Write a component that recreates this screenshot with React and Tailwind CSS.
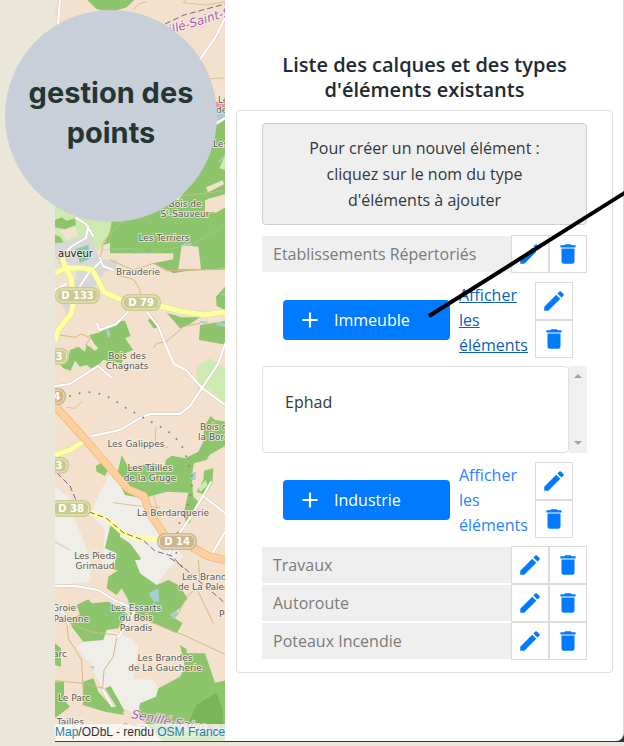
const GREEN = "#8dc56c";
const LIGHT = "#cdebb0";
const PALE = "#f0eee8";
const WATER = "#a9cdd3";
const TRACK = "#d3b885";

const labels = [
  { x: 185, y: 207, lines: ["Bois de", "Sᵗ-Sauveur"], anchor: "middle" },
  { x: 164, y: 241, lines: ["Les Terriers"], anchor: "middle" },
  { x: 138, y: 275, lines: ["Brauderie"], anchor: "middle" },
  { x: 127, y: 359, lines: ["Bois des", "Chagnats"], anchor: "middle" },
  { x: 136, y: 447, lines: ["Les Galippes"], anchor: "middle" },
  { x: 150, y: 471, lines: ["Les Tailles", "de la Gruge"], anchor: "middle" },
  { x: 200, y: 430, lines: ["Bois de"], anchor: "start" },
  { x: 198, y: 440, lines: ["la Borde"], anchor: "start" },
  { x: 173, y: 516, lines: ["La Berdarquerie"], anchor: "middle" },
  { x: 95, y: 559, lines: ["Les Pieds", "Grimaud"], anchor: "middle" },
  { x: 182, y: 580, lines: ["Les Brandes"], anchor: "start" },
  { x: 178, y: 590, lines: ["de La Palenne"], anchor: "start" },
  { x: 136, y: 611, lines: ["Les Essarts", "du Bois", "Paradis"], anchor: "middle" },
  { x: 76, y: 611, lines: ["Groie"], anchor: "end" },
  { x: 89, y: 622, lines: ["Palenne"], anchor: "end" },
  { x: 219, y: 617, lines: ["Pi"], anchor: "start" },
  { x: 67, y: 657, lines: ["Parc"], anchor: "end" },
  { x: 165, y: 661, lines: ["Les Brandes", "de La Gaucherie"], anchor: "middle" },
  { x: 74, y: 701, lines: ["Le Parc"], anchor: "middle" },
  { x: 84, y: 725, lines: ["Tailles"], anchor: "end" },
  { x: 218, y: 103, lines: ["Les"], anchor: "start" },
  { x: 216, y: 113, lines: ["des"], anchor: "start" },
  { x: 213, y: 147, lines: ["Les"], anchor: "start" },
];

const shields = [
  { x: 55, y: 287, w: 45, text: "D 133", fill: "#cbcb91" },
  { x: 121, y: 294, w: 40, text: "D 79", fill: "#cbcb91" },
  { x: 36, y: 348, w: 33, text: "3", fill: "#cbcb91", tx: 59 },
  { x: 36, y: 388, w: 30, text: "4", fill: "#cfb58b", tx: 57 },
  { x: 36, y: 457, w: 33, text: "3", fill: "#cbcb91", tx: 59 },
  { x: 51, y: 500, w: 40, text: "D 38", fill: "#cbcb91" },
  { x: 157, y: 533, w: 40, text: "D 14", fill: "#cfb58b" },
];

function MapDrawing() {
  return (
    <svg
      className="block h-full w-full"
      viewBox="55 0 170 741"
      preserveAspectRatio="xMinYMin slice"
      role="img"
      aria-label="Carte"
      fontFamily="'DejaVu Sans', sans-serif"
    >
      <rect x="55" width="170" height="741" fill="#f3e1ce" />

      <g transform="scale(.333333)">
        <path fill={GREEN} d="M262 0H403L380 22 335 36 290 28Z" />
        <path fill={GREEN} d="M675 360 640 380 620 470 530 610 430 640 330 662V760H675Z" />
        <path fill="#f3e1ce" d="M675 583 622 597 612 638 658 636 675 622ZM618 562 668 541 672 553 624 577Z" />
        <path fill={LIGHT} d="M165 600 330 655 322 720 296 750H165Z" />
        <path fill="#ee8d91" d="M645 305H675V325H648Z" />
        <path fill={WATER} d="M648 328H675V355L652 362ZM655 485 675 462V468L658 488Z" />
        <path fill={LIGHT} d="M675 465 658 505 675 510Z" />
        <g fill="none" stroke={TRACK} strokeWidth="3">
          <path d="M557 0 550 8 620 15 675 5M540 588 620 580 675 570M630 236 675 234M400 30 415 12 440 5M165 40 180 45" opacity=".8" />
        </g>
      </g>

      <g transform="translate(50 200) scale(.333333)">
        <path fill={GREEN} d="M180 60 200 0H530V205L415 212 370 220 310 190 370 178V140L300 125 250 128 230 115 190 125 160 135Z" />
        <path fill="#f3e1ce" d="M465 0H530V20L498 38 465 34ZM395 135 445 140 453 208H385Z" />
        <path fill={LIGHT} d="M15 10 90 40 185 62 180 95 160 135 130 120 100 135 60 125 15 145Z" />
        <path fill="#f3e1ce" d="M30 90 75 80 85 105 50 120Z" />
        <path fill={GREEN} d="M15 60 35 52 50 62 75 55 78 75 45 88 15 82ZM15 105 30 110 42 130 25 142 15 138Z" />
        <path fill="#d8d8d8" d="M60 125 110 100 130 125 150 180 200 178 200 210 165 215 130 270 75 265 80 200 30 195 15 170V130ZM35 315 60 305 70 335 50 340Z" />
        <path fill="#8ccba9" d="M75 148 115 135 120 175 90 190Z" />
        <path fill={GREEN} d="M530 255 498 290 500 318 530 332ZM350 338 395 352 450 352 420 372 390 385ZM293 360 310 352 325 380 312 386ZM450 375 530 362V434L447 420ZM118 405 145 398 200 365 225 362 242 408 225 415 250 450 225 460 215 490 160 480 130 510 110 495 90 500 75 482 62 512 40 505 25 488 55 475 60 450 85 440 105 455 110 435 140 445Z" />
        <path fill="#f3e1ce" d="M115 415 145 445 135 452 105 430Z" />
        <path fill={LIGHT} d="M440 500 480 475 530 510V570H440Z" />
        <path fill={WATER} d="M400 130 428 130 422 138 405 138ZM450 362 475 365 470 372 450 368ZM498 365 530 370V382L500 376ZM168 390 176 388 182 408 174 414ZM510 285 526 278V286Z" />
        <g fill="none" stroke={TRACK} strokeWidth="3">
          <path d="M180 180 250 210 310 190 350 212 530 208M150 180 160 125 215 65M250 238 268 265 272 285M30 405 75 412 95 402 122 415 105 438M310 445 320 430 350 425 400 380 450 370M250 238 200 225" />
        </g>
        <path d="M155 150 240 145 290 160 330 152 420 135 530 75" fill="none" stroke="#a9cbb0" strokeWidth="2" strokeDasharray="12 4" />
      </g>

      <g transform="translate(50 380) scale(.333333)">
        <path fill={PALE} d="M185 275 225 320 290 350 340 450 360 480 400 530 350 570H15V320L80 370 90 420 110 440 135 490 160 500 165 460 120 410 150 335 170 300Z" />
        <path fill="#f3e1ce" d="M30 270 170 280 150 340 110 390 165 450 155 570H130L100 480 75 420Z" />
        <path fill={LIGHT} d="M455 0 530 0V75L490 40Z" />
        <path fill={GREEN} d="M215 225 235 262 310 250 345 265 347 240 365 227 405 235 445 215 460 185 462 140 482 108 495 120 530 125V195L478 225 470 240 432 250 425 290 430 350 445 365 425 410 420 428 410 432 400 405 415 338 350 335 280 355 225 345 200 290ZM137 258 155 248 178 260 165 288 140 275ZM462 272 490 265 487 310 465 345 440 335 460 300ZM180 440 190 432 210 445V470L240 490 273 535 250 570H190L200 520 165 505Z" />
        <path fill={LIGHT} d="M445 320 468 300 472 318 450 336Z" />
        <path fill={WATER} d="M422 280 438 275 436 300 425 300ZM290 300 300 295 300 310Z" />
        <g fill="none" stroke={TRACK} strokeWidth="3">
          <path d="M50 82 75 85 95 65M318 140 315 190 355 203M190 368 240 375 290 380 330 382M310 345 320 380 318 400M15 485 60 510" opacity=".8" />
        </g>
      </g>

      <g transform="translate(50 560) scale(.333333)">
        <path fill={PALE} d="M15 0H120V65L15 75ZM240 0H370L345 40 320 75 285 60 260 30ZM80 260 165 205 240 235 265 260 250 355 310 360 325 385 318 410 270 430 265 465 210 440 185 395 155 380 120 310 95 285Z" />
        <path fill={GREEN} d="M205 0H255L270 40 320 75 355 60 385 75 413 115 390 145 360 165 398 190 380 220 335 200 300 185 240 165 235 120 215 85 200 105 170 85 175 50 205 30ZM80 135 115 118 125 130 175 125 205 140 235 165 205 205 170 210 160 240 100 245 65 200 60 175 90 165ZM390 255 410 268V280L465 280 495 368 530 360V570H360L265 465 270 430 318 410 325 385 390 350 405 320ZM100 365 130 355 145 395 185 440 215 440 222 465 165 455 98 435ZM165 385 182 378 225 455 205 450ZM15 365H42V420L60 440 15 475ZM15 250 33 265V320L15 315Z" />
        <path fill="#78b657" d="M440 435 500 398 518 450 520 500 460 550 415 490Z" />
        <path fill={WATER} d="M295 100 325 85 328 125 310 125ZM360 165 380 150 385 165 370 178ZM118 320 130 318 133 328Z" />
        <g fill="none" stroke={TRACK} strokeWidth="3">
          <path d="M50 185 55 235 95 300 100 400M50 185 120 215 200 225M200 235 190 290 162 330 158 385M15 362 100 370 160 385M300 185 400 225 530 285M350 180 385 160 410 110 440 85 490 190M445 0 450 60" />
        </g>
      </g>

      <g fill="none" strokeLinecap="round" strokeLinejoin="round">
        {[
          { c: "#d5cabc", w: 3 },
          { c: "#ffffff", w: 2 },
        ].map(({ c, w }) => (
          <g key={c} stroke={c} strokeWidth={w}>
            <path d="M60 0 58 24M225 18 215 38 198 62M225 118 212 126" />
            <path d="M76 218 86 224 93 236M88 226 86 238 72 246 66 252M100 258 103 266 113 270M100 262 88 274 80 286M128 312 116 324 100 330 97 324M147 312 158 326 166 346 174 364 186 370 202 388 225 405M55 386 70 384 98 366 112 378M225 344 218 364 202 388 190 406 180 414 150 414 140 418 120 430 92 436M55 290 66 284" />
            <path d="M203 496 225 513M203 496 190 518 176 538 168 555M225 532 212 554" />
            <path d="M55 586 75 586 98 590 114 600 128 606 134 613 118 638M55 608 66 615 68 624M103 690 112 706" />
          </g>
        ))}
        <path d="M203 496 211 482" stroke="#fff" strokeWidth="2" />
        <path d="M55 273 66 268 84 268 92 270 98 280 104 292 122 300 160 306 180 311 204 315 225 312M66 268 71 278 74 300 71 314 58 330 55 342M66 268 62 258M55 455 70 450 86 440" stroke="#dede9c" strokeWidth="6" strokeLinecap="butt" />
        <path d="M55 273 66 268 84 268 92 270 98 280 104 292 122 300 160 306 180 311 204 315 225 312M66 268 71 278 74 300 71 314 58 330 55 342M66 268 62 258M55 455 70 450 86 440M85 511 106 518 122 532 138 539 160 539" stroke="#feff9f" strokeWidth="5" strokeLinecap="butt" />
        <path d="M55 406 84 438 128 489 144 496 150 514 168 540 190 546 208 556 225 560" stroke="#e3ae78" strokeWidth="8" />
        <path d="M55 406 84 438 128 489 144 496 150 514 168 540 190 546 208 556 225 560" stroke="#ffcf9c" strokeWidth="7" />
        <g stroke="#8d5a87" strokeWidth="1" strokeDasharray="6 3" strokeLinecap="butt">
          <path d="M165 24 184 15 225 4" />
          <path d="M57 473 70 486 76 500M89 512 106 518 124 533 143 540 155 551 172 556 183 568M170 558 182 566 200 582 212 592 225 603M110 738 124 724 150 727 180 735" />
        </g>
        <path d="M70 396 80 393 92 392 101 394 110 398 120 404 129 410 138 414 147 420 157 425 166 430 175 437 182 446 186 456 189 466 192 476 192 486 190 497 187 507 178 526 176 558" stroke="#8c8078" strokeWidth="2" strokeDasharray="0 10" />
      </g>

      <g fontSize="9" fill="#5b5852" stroke="#f7f2e9" strokeWidth="2" strokeOpacity=".75" paintOrder="stroke" strokeLinejoin="round">
        {labels.map(({ x, y, lines, anchor }) => (
          <text key={lines[0] + y} x={x} y={y} textAnchor={anchor}>
            {lines.map((line, i) => (
              <tspan key={line} x={x} dy={i === 0 ? 0 : 10}>{line}</tspan>
            ))}
          </text>
        ))}
        <text x="93" y="257" textAnchor="end" fontSize="10" fill="#222">auveur</text>
        <g fontSize="12" fontStyle="italic" fill="#b05cb5">
          <text transform="translate(170 34) rotate(-17)">illé-Saint-Sauveur</text>
          <text transform="translate(131 718) rotate(11)">Senillé-Saint-Sauveur</text>
        </g>
      </g>

      {shields.map(({ x, y, w, text, fill, tx }) => (
        <g key={x + text + y}>
          <rect x={x} y={y} width={w} height="17" rx="8" fill={fill} />
          <rect x={x + 2} y={y + 2} width={w - 4} height="13" rx="6" fill="none" stroke="#eeeacb" />
          <text x={tx ?? x + w / 2} y={y + 12} textAnchor="middle" fontSize="10" fontWeight="700" fill="#fff">{text}</text>
        </g>
      ))}
    </svg>
  );
}

const icons = {
  edit: "M3 17.25V21h3.75L17.81 9.94l-3.75-3.75L3 17.25zM20.71 7.04a1 1 0 0 0 0-1.41l-2.34-2.34a1 1 0 0 0-1.41 0l-1.83 1.83 3.75 3.75 1.83-1.83z",
  trash: "M6 19a2 2 0 0 0 2 2h8a2 2 0 0 0 2-2V7H6v12zM19 4h-3.5l-1-1h-5l-1 1H5v2h14V4z",
  plus: "M19 13h-6v6h-2v-6H5v-2h6V5h2v6h6v2z",
};

function Icon({ name }) {
  return (
    <svg className="size-[26px]" viewBox="0 0 24 24" fill="currentColor" aria-hidden="true">
      <path d={icons[name]} />
    </svg>
  );
}

function IconButton({ label, icon }) {
  return (
    <button
      type="button"
      aria-label={label}
      className="flex size-[38px] items-center justify-center border border-[#dcdcdc] bg-white text-[#007bff]"
    >
      <Icon name={icon} />
    </button>
  );
}

function Actions({ name, vertical }) {
  return (
    <div className={vertical ? "flex flex-col" : "flex"}>
      <IconButton label={`Modifier ${name}`} icon="edit" />
      <IconButton label={`Supprimer ${name}`} icon="trash" />
    </div>
  );
}

function LayerRow({ name }) {
  return (
    <div className="flex items-center">
      <div className="flex h-9 flex-1 items-center bg-[#efefef] pl-[11px] text-[#7b7b7b]">{name}</div>
      <Actions name={name} />
    </div>
  );
}

function TypeRow({ name, active }) {
  return (
    <div className="flex items-center pr-3.5 pl-[21px]">
      <button type="button" className="flex h-10 flex-1 items-center gap-[11px] rounded bg-[#007bff] pl-3.5 text-white">
        <Icon name="plus" />
        {name}
      </button>
      <a
        href="#elements"
        className={active ? "ml-[9px] w-[76px] leading-[25px] text-[#0f5fb5] underline" : "ml-[9px] w-[76px] leading-[25px] text-[#2684ff]"}
      >
        Afficher<br />les<br />éléments
      </a>
      <Actions name={name} vertical />
    </div>
  );
}

export default function App() {
  return (
    <div className="relative flex min-h-screen flex-col overflow-hidden bg-[#ebe7d8] pb-1 font-['Open_Sans','Noto_Sans',sans-serif] text-base text-[#32383e]">
      <div className="flex flex-1">
        <aside className="relative ml-[55px] w-[170px] shrink-0 border-b border-[#444]">
          <div className="absolute inset-0 overflow-hidden">
            <MapDrawing />
            <div className="absolute inset-x-0 bottom-0 overflow-hidden bg-white/70 font-['Liberation_Sans',sans-serif] text-xs leading-[17px] whitespace-nowrap text-[#333]">
              <a href="#map" className="text-[#1a83b0]">Map</a>/ODbL - rendu <a href="#osm" className="text-[#1a83b0]">OSM France</a>
            </div>
          </div>
          <div className="absolute top-2.5 -left-[50px] flex size-[212px] items-center justify-center rounded-full bg-[#c8cfd9] pb-1.5 text-center font-['Inter',sans-serif] text-[29px] leading-10 font-bold text-[#253632]">
            <h1>gestion des<br />points</h1>
          </div>
        </aside>

        <div className="flex flex-1 bg-[#303238] pb-px">
          <main className="flex-1 rounded-br-lg border-r border-[#dedede] bg-white pt-[52px] pr-2.5 pl-[11px]">
            <h2 className="text-center text-xl leading-[25px] font-semibold text-[#212a30]">
              Liste des calques et des types<br />d'éléments existants
            </h2>
            <section className="mt-2 rounded border border-[#e0e0e0] px-[25px] py-3">
              <p className="rounded border border-[#cfcfcf] bg-[#efefef] py-[11px] text-center leading-[26px]">
                Pour créer un nouvel élément :<br />cliquez sur le nom du type<br />d'éléments à ajouter
              </p>
              <div className="mt-2.5"><LayerRow name="Etablissements Répertoriés" /></div>
              <div className="mt-[9px]"><TypeRow name="Immeuble" active /></div>
              <div className="mt-2 flex h-[87px]">
                <div className="flex-1 rounded border border-[#dfdfdf] px-[22px] py-[22px] leading-[26px]">Ephad</div>
                <div className="flex w-[18px] flex-col items-center justify-between bg-[#f0f0f0] py-2" aria-hidden="true">
                  <span className="border-x-4 border-b-4 border-x-transparent border-b-[#a3a3a3]" />
                  <span className="border-x-4 border-t-4 border-x-transparent border-t-[#a3a3a3]" />
                </div>
              </div>
              <div className="mt-[9px]"><TypeRow name="Industrie" /></div>
              <div className="mt-2">
                <LayerRow name="Travaux" />
                <LayerRow name="Autoroute" />
                <LayerRow name="Poteaux Incendie" />
              </div>
            </section>
          </main>
        </div>
      </div>
      <svg className="pointer-events-none absolute top-[190px] right-0 h-[130px] w-[197px]" viewBox="427 190 197 130" aria-hidden="true">
        <path d="M429 316 626 192" stroke="#000" strokeWidth="4" />
      </svg>
    </div>
  );
}
